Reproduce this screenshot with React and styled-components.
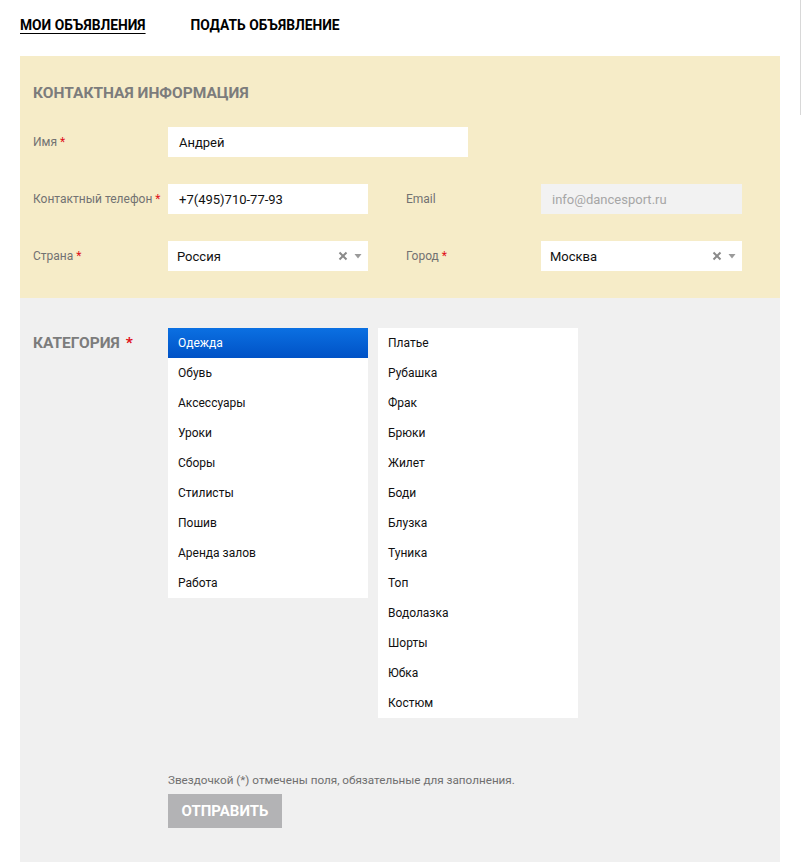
import React from "react";
import styled, { createGlobalStyle } from "styled-components";

const Global = createGlobalStyle`
  html, body { margin: 0; padding: 0; background: #fff; }
  body { font-family: Roboto, "Liberation Sans", sans-serif; color: #000; }
  * { box-sizing: border-box; }
`;

const Page = styled.div`
  width: 780px;
  padding-left: 20px;
`;

const Nav = styled.nav`
  display: flex;
  gap: 45px;
  height: 56px;
  padding-top: 16px;
`;

const NavLink = styled.a`
  font-size: 13.8px;
  font-weight: 700;
  color: #000;
  line-height: 18px;
  text-transform: uppercase;
  text-decoration: ${(p) => (p.$active ? "underline" : "none")};
  text-underline-offset: 3px;
  text-decoration-thickness: 1px;
`;

const ContactPanel = styled.section`
  background: #f6ecc8;
  padding: 27px 13px 27px;
`;

const Heading = styled.h2`
  margin: 0 0 24px;
  font-size: 15.5px;
  line-height: 20px;
  font-weight: 700;
  color: #7c7c7c;
  text-transform: uppercase;
`;

const FieldGrid = styled.div`
  display: grid;
  grid-template-columns: 135px 200px 38px 135px 201px;
  grid-auto-rows: 30px;
  row-gap: 27px;
  align-items: center;
`;

const Label = styled.label`
  grid-column: ${(p) => p.$col};
  font-size: 12px;
  color: #727272;
  white-space: nowrap;
`;

const Star = styled.span`
  color: #e0101a;
  margin-left: ${(p) => p.$gap || "3px"};
`;

const Input = styled.div`
  grid-column: ${(p) => p.$span || "auto"};
  width: ${(p) => p.$width || "auto"};
  height: 30px;
  background: ${(p) => (p.$disabled ? "#f2f2f2" : "#fff")};
  color: ${(p) => (p.$disabled ? "#a6a6a6" : "#111")};
  font-size: 13px;
  display: flex;
  align-items: center;
  padding: 0 11px;
`;

const Select = styled.div`
  grid-column: ${(p) => p.$col};
  height: 30px;
  background: #fff;
  display: flex;
  align-items: center;
  padding: 0 6px 0 9px;
  font-size: 13px;
  color: #111;
`;

const SelectValue = styled.span`
  flex: 1;
`;

const SelectIcons = styled.span`
  display: flex;
  align-items: center;
  gap: 6px;
`;

const CategoryPanel = styled.section`
  background: #f0f0f0;
  padding: 30px 13px 40px;
`;

const CategoryRow = styled.div`
  display: flex;
  align-items: flex-start;
`;

const CategoryLabel = styled.div`
  width: 135px;
  font-size: 15.5px;
  line-height: 30px;
  font-weight: 700;
  color: #7c7c7c;
  text-transform: uppercase;
`;

const Lists = styled.div`
  display: flex;
  gap: 10px;
  align-items: flex-start;
`;

const List = styled.ul`
  list-style: none;
  margin: 0;
  padding: 0;
  width: 200px;
  background: #fff;
`;

const Item = styled.li`
  height: 30px;
  line-height: 30px;
  padding: 0 10px;
  font-size: 12px;
  color: ${(p) => (p.$selected ? "#fff" : "#111")};
  background: ${(p) =>
    p.$selected ? "linear-gradient(#0b70e2, #0052c6)" : "transparent"};
`;

const Footer = styled.div`
  margin: 55px 0 0 135px;
  display: flex;
  flex-direction: column;
  align-items: flex-start;
`;

const Note = styled.p`
  margin: 0 0 7px;
  font-size: 11.7px;
  line-height: 14px;
  color: #6f6f6f;
`;

const SubmitButton = styled.button`
  width: 114px;
  height: 34px;
  border: 0;
  background: #b3b3b5;
  color: #fff;
  font-family: inherit;
  font-weight: 700;
  font-size: 15px;
  text-transform: uppercase;
  padding: 0;
`;

const ScrollEdge = styled.div`
  position: fixed;
  top: 0;
  left: 800px;
  width: 1px;
  height: 115px;
  background: #d8d8d8;
`;

const ClearIcon = () => (
  <svg width="10" height="10" viewBox="0 0 10 10">
    <path d="M1.5 1.5 L8.5 8.5 M8.5 1.5 L1.5 8.5" stroke="#8a8a8a" strokeWidth="2" />
  </svg>
);

const Caret = () => (
  <svg width="8" height="6" viewBox="0 0 8 6">
    <path d="M0.5 1 L7.5 1 L4 5.5 Z" fill="#9a9a9a" />
  </svg>
);

const main = ["Одежда", "Обувь", "Аксессуары", "Уроки", "Сборы", "Стилисты", "Пошив", "Аренда залов", "Работа"];
const sub = ["Платье", "Рубашка", "Фрак", "Брюки", "Жилет", "Боди", "Блузка", "Туника", "Топ", "Водолазка", "Шорты", "Юбка", "Костюм"];

export default function App() {
  return (
    <>
      <Global />
      <ScrollEdge />
      <Page>
        <Nav>
          <NavLink $active>Мои объявления</NavLink>
          <NavLink>Подать объявление</NavLink>
        </Nav>
        <ContactPanel>
          <Heading>Контактная информация</Heading>
          <FieldGrid>
            <Label $col="1">Имя<Star>*</Star></Label>
            <Input $span="2 / span 3" $width="300px">Андрей</Input>

            <Label $col="1">Контактный телефон<Star>*</Star></Label>
            <Input $span="2">+7(495)710-77-93</Input>
            <Label $col="4">Email</Label>
            <Input $span="5" $disabled>info@dancesport.ru</Input>

            <Label $col="1">Страна<Star>*</Star></Label>
            <Select $col="2">
              <SelectValue>Россия</SelectValue>
              <SelectIcons><ClearIcon /><Caret /></SelectIcons>
            </Select>
            <Label $col="4">Город<Star>*</Star></Label>
            <Select $col="5">
              <SelectValue>Москва</SelectValue>
              <SelectIcons><ClearIcon /><Caret /></SelectIcons>
            </Select>
          </FieldGrid>
        </ContactPanel>
        <CategoryPanel>
          <CategoryRow>
            <CategoryLabel>Категория<Star $gap="6px">*</Star></CategoryLabel>
            <Lists>
              <List>
                {main.map((m, i) => (
                  <Item key={m} $selected={i === 0}>{m}</Item>
                ))}
              </List>
              <List>
                {sub.map((s) => (
                  <Item key={s}>{s}</Item>
                ))}
              </List>
            </Lists>
          </CategoryRow>
          <Footer>
            <Note>Звездочкой (*) отмечены поля, обязательные для заполнения.</Note>
            <SubmitButton>Отправить</SubmitButton>
          </Footer>
        </CategoryPanel>
      </Page>
    </>
  );
}
